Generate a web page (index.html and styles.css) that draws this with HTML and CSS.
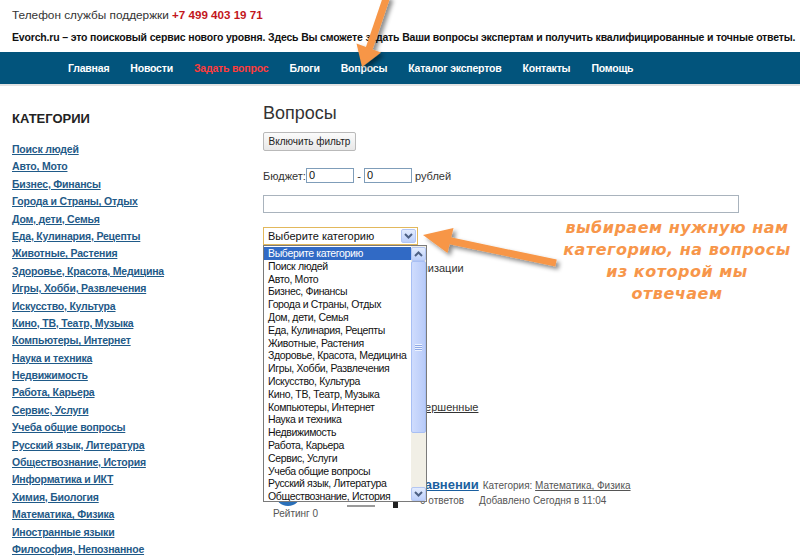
FILE: index.html
```html
<!DOCTYPE html>
<html lang="ru">
<head>
<meta charset="utf-8">
<title>Вопросы</title>
<link rel="stylesheet" href="styles.css">
</head>
<body>
<div class="page">
  <header class="top">
    <div class="phone">Телефон службы поддержки <b>+7 499 403 19 71</b></div>
    <div class="slogan">Evorch.ru – это поисковый сервис нового уровня. Здесь Вы сможете задать Ваши вопросы экспертам и получить квалифицированные и точные ответы.</div>
  </header>
  <nav class="nav">
    <a href="#">Главная</a>
    <a href="#">Новости</a>
    <a href="#" class="hot">Задать вопрос</a>
    <a href="#">Блоги</a>
    <a href="#">Вопросы</a>
    <a href="#">Каталог экспертов</a>
    <a href="#">Контакты</a>
    <a href="#">Помощь</a>
  </nav>
  <div class="layout">
    <aside class="side">
      <h2>КАТЕГОРИИ</h2>
      <ul>
        <li><a href="#">Поиск людей</a></li>
        <li><a href="#">Авто, Мото</a></li>
        <li><a href="#">Бизнес, Финансы</a></li>
        <li><a href="#">Города и Страны, Отдых</a></li>
        <li><a href="#">Дом, дети, Семья</a></li>
        <li><a href="#">Еда, Кулинария, Рецепты</a></li>
        <li><a href="#">Животные, Растения</a></li>
        <li><a href="#">Здоровье, Красота, Медицина</a></li>
        <li><a href="#">Игры, Хобби, Развлечения</a></li>
        <li><a href="#">Искусство, Культура</a></li>
        <li><a href="#">Кино, ТВ, Театр, Музыка</a></li>
        <li><a href="#">Компьютеры, Интернет</a></li>
        <li><a href="#">Наука и техника</a></li>
        <li><a href="#">Недвижимость</a></li>
        <li><a href="#">Работа, Карьера</a></li>
        <li><a href="#">Сервис, Услуги</a></li>
        <li><a href="#">Учеба общие вопросы</a></li>
        <li><a href="#">Русский язык, Литература</a></li>
        <li><a href="#">Обществознание, История</a></li>
        <li><a href="#">Информатика и ИКТ</a></li>
        <li><a href="#">Химия, Биология</a></li>
        <li><a href="#">Математика, Физика</a></li>
        <li><a href="#">Иностранные языки</a></li>
        <li><a href="#">Философия, Непознанное</a></li>
      </ul>
    </aside>
    <main class="main">
      <h1>Вопросы</h1>
      <div class="btn-row"><span class="btn">Включить фильтр</span></div>
      <div class="budget">
        <span class="lbl">Бюджет:</span>
        <span class="inp">0</span>
        <span class="dash">-</span>
        <span class="inp">0</span>
        <span class="rub">рублей</span>
      </div>
      <div class="search"></div>
      <div class="select-wrap">
        <div class="select">
          <span class="select-text">Выберите категорию</span>
          <span class="xp-btn sel-arrow"><svg width="9" height="6" viewBox="0 0 9 6"><path d="M1 1 L4.5 4.5 L8 1" fill="none" stroke="#4d6185" stroke-width="2"/></svg></span>
        </div>
        <div class="listbox">
          <div class="opts">
            <div class="opt sel">Выберите категорию</div>
            <div class="opt">Поиск людей</div>
            <div class="opt">Авто, Мото</div>
            <div class="opt">Бизнес, Финансы</div>
            <div class="opt">Города и Страны, Отдых</div>
            <div class="opt">Дом, дети, Семья</div>
            <div class="opt">Еда, Кулинария, Рецепты</div>
            <div class="opt">Животные, Растения</div>
            <div class="opt">Здоровье, Красота, Медицина</div>
            <div class="opt">Игры, Хобби, Развлечения</div>
            <div class="opt">Искусство, Культура</div>
            <div class="opt">Кино, ТВ, Театр, Музыка</div>
            <div class="opt">Компьютеры, Интернет</div>
            <div class="opt">Наука и техника</div>
            <div class="opt">Недвижимость</div>
            <div class="opt">Работа, Карьера</div>
            <div class="opt">Сервис, Услуги</div>
            <div class="opt">Учеба общие вопросы</div>
            <div class="opt">Русский язык, Литература</div>
            <div class="opt">Обществознание, История</div>
          </div>
          <div class="sb">
            <span class="xp-btn sb-btn"><svg width="9" height="6" viewBox="0 0 9 6"><path d="M1 5 L4.5 1.5 L8 5" fill="none" stroke="#4d6185" stroke-width="2"/></svg></span>
            <span class="thumb"><span class="grip"></span></span>
            <span class="track"></span>
            <span class="xp-btn sb-btn"><svg width="9" height="6" viewBox="0 0 9 6"><path d="M1 1 L4.5 4.5 L8 1" fill="none" stroke="#4d6185" stroke-width="2"/></svg></span>
          </div>
        </div>
      </div>
      <div class="spec"><span class="chk"></span>Вопросы по моей специализации</div>
      <div class="tabs"><a href="#">Все</a> <a href="#">Открытые</a> <a href="#">Завершенные</a></div>
      <div class="q">
        <div class="q-left">
          <span class="ava"></span>
          <span class="rating">Рейтинг 0</span>
        </div>
        <div class="q-body">
          <div class="q-title"><a href="#">Задача о сравнении</a><span class="cat">Категория: <a href="#">Математика, Физика</a></span></div>
          <div class="q-meta"><span class="bar"></span><span class="ico"></span><span class="cnt">0 ответов</span><span class="date">Добавлено Сегодня в 11:04</span></div>
        </div>
      </div>
    </main>
  </div>

  <svg class="arrows" width="800" height="556" viewBox="0 0 800 556">
    <defs>
      <filter id="sh" x="-20%" y="-20%" width="140%" height="140%">
        <feDropShadow dx="3" dy="3" stdDeviation="2" flood-color="#000" flood-opacity="0.45"/>
      </filter>
    </defs>
    <g filter="url(#sh)" fill="#f79646" stroke="#f79646">
      <line x1="387" y1="-4" x2="369" y2="49" stroke-width="7"/>
      <polygon points="362,67 381,52.5 356.5,43.5" stroke="none"/>
      <line x1="556" y1="263" x2="450" y2="240.8" stroke-width="7"/>
      <polygon points="423,235 453.5,228 447.5,253" stroke="none"/>
    </g>
  </svg>
  <div class="note">выбираем нужную нам<br>категорию, на вопросы<br>из которой мы<br>отвечаем</div>
</div>
</body>
</html>
```

FILE: styles.css
```css
* { box-sizing: border-box; }
body {
  margin: 0;
  font-family: "Liberation Sans", Arial, sans-serif;
  color: #222;
  background: #fff;
}
.page {
  position: relative;
  width: 800px;
  height: 556px;
  overflow: hidden;
}
.top { padding: 6px 12px 0; }
.phone {
  font-size: 11.8px;
  line-height: 18px;
  color: #333;
}
.phone b {
  color: #c3161c;
  font-size: 11.6px;
}
.slogan {
  margin-top: 6px;
  font-size: 10.5px;
  letter-spacing: -0.17px;
  line-height: 14px;
  font-weight: bold;
  color: #111;
  white-space: nowrap;
}
.nav {
  margin-top: 8px;
  height: 34px;
  background: #02547c;
  border-bottom: 2px solid #e3e3e3;
  display: flex;
  align-items: center;
  gap: 21px;
  padding-left: 68px;
}
.nav a {
  color: #fff;
  font-size: 10.5px;
  letter-spacing: -0.2px;
  font-weight: bold;
  text-decoration: none;
}
.nav a.hot { color: #ff3b3b; }

.layout { display: flex; }
.side {
  width: 263px;
  padding-left: 12px;
  flex: none;
}
.side h2 {
  margin: 25px 0 0;
  font-size: 13px;
  line-height: 16px;
  font-weight: bold;
  color: #222;
}
.side ul {
  list-style: none;
  margin: 12px 0 0;
  padding: 0;
}
.side li { line-height: 17.4px; height: 17.4px; }
.side a {
  font-size: 10.5px;
  letter-spacing: -0.2px;
  font-weight: bold;
  color: #1f5a88;
  text-decoration: underline;
}

.main { flex: 1; font-size: 11px; color: #333; }
.main h1 {
  margin: 16px 0 0;
  font-size: 18px;
  line-height: 22px;
  font-weight: normal;
  color: #333;
}
.btn-row { margin-top: 8px; height: 19px; }
.btn {
  display: inline-flex;
  align-items: center;
  height: 19px;
  width: 93px;
  justify-content: center;
  border: 1px solid #b9b9b9;
  border-radius: 2px;
  background: linear-gradient(#fbfbfb, #e8e8e8);
  font-size: 10px;
  color: #222;
}
.budget {
  margin-top: 17px;
  height: 15px;
  display: flex;
  align-items: center;
}
.lbl { width: 43px; }
.inp {
  width: 48px;
  height: 15px;
  border: 1px solid #7f9db9;
  padding-left: 2px;
  line-height: 13px;
  color: #111;
}
.dash { width: 10px; text-align: center; }
.rub { margin-left: 3px; }
.search {
  margin-top: 12px;
  width: 476px;
  height: 18px;
  border: 1px solid #a9b3bd;
}
.select-wrap {
  position: relative;
  margin-top: 14px;
  width: 155px;
}
.select {
  height: 18px;
  border: 1px solid #e2b85c;
  display: flex;
  align-items: center;
  justify-content: space-between;
  padding: 0 1px 0 4px;
  color: #111;
}
.xp-btn {
  display: flex;
  align-items: center;
  justify-content: center;
  border: 1px solid #b3c6f3;
  border-radius: 2px;
  background: linear-gradient(#e3ecfe, #bccffa);
}
.sel-arrow { width: 15px; height: 14px; }
.listbox {
  position: absolute;
  left: 0;
  top: 18px;
  width: 164px;
  height: 257px;
  border: 1px solid #7a7a7a;
  background: #fff;
  display: flex;
  z-index: 2;
}
.opts { flex: 1; padding-top: 1px; overflow: hidden; }
.opt {
  height: 12.8px;
  line-height: 12.8px;
  padding-left: 4px;
  white-space: nowrap;
  font-size: 10.5px;
  letter-spacing: -0.35px;
  color: #111;
}
.opt.sel { background: #316ac5; color: #fff; }
.sb {
  width: 15px;
  flex: none;
  display: flex;
  flex-direction: column;
  background: #f1efe6;
  padding-top: 1px;
}
.sb-btn { height: 14px; flex: none; }
.thumb {
  height: 172px;
  flex: none;
  border: 1px solid #a8bff4;
  border-radius: 2px;
  background: linear-gradient(to right, #cfdcfd, #b8cbf9);
  display: flex;
  align-items: center;
  justify-content: center;
}
.grip {
  width: 7px;
  height: 7px;
  background: repeating-linear-gradient(#eef3fe 0 1px, #8ea9e6 1px 2px);
}
.track { flex: 1; }

.spec {
  margin-top: 16px;
  line-height: 14px;
  display: flex;
  align-items: center;
  padding-left: 12px;
}
.chk {
  width: 13px;
  height: 13px;
  border: 1px solid #1c5180;
  margin-right: 5px;
}
.tabs {
  margin-top: 125px;
  line-height: 14px;
  padding-left: 51px;
}
.tabs a { color: #333; text-decoration: underline; margin-right: 8px; }
.q {
  margin-top: 63px;
  display: flex;
}
.q-left {
  width: 86px;
  padding-left: 10px;
  flex: none;
  display: flex;
  flex-direction: column;
}
.ava {
  width: 26px;
  height: 26px;
  border-radius: 50%;
  background: #2a6fb8;
  margin: 3px 0 0 2px;
}
.rating {
  margin-top: 1px;
  font-size: 10px;
  line-height: 13px;
  color: #555;
}
.q-title {
  line-height: 16px;
  white-space: nowrap;
}
.q-title > a {
  font-size: 13px;
  font-weight: bold;
  color: #1a5fa0;
  text-decoration: underline;
}
.cat { font-size: 10px; color: #555; margin-left: 4px; }
.cat a { color: #555; text-decoration: underline; }
.q-meta {
  display: flex;
  align-items: center;
  font-size: 10px;
  line-height: 14px;
  height: 14px;
  color: #555;
}
.bar {
  width: 28px;
  height: 2px;
  background: #9a9a9a;
  margin-left: -2px;
  margin-top: 10px;
}
.ico { width: 5px; height: 7px; background: #222; margin-left: 18px; margin-top: 6px; }
.cnt { margin-left: 22px; }
.date { margin-left: 15px; }

.arrows {
  position: absolute;
  left: 0;
  top: 0;
  pointer-events: none;
  z-index: 5;
}
.note {
  position: absolute;
  left: 547px;
  top: 217px;
  width: 260px;
  text-align: center;
  font-family: "DejaVu Sans", Verdana, sans-serif;
  font-weight: bold;
  font-style: italic;
  font-size: 16px;
  line-height: 22px;
  letter-spacing: 0.5px;
  color: #f7964a;
  z-index: 6;
}
```
